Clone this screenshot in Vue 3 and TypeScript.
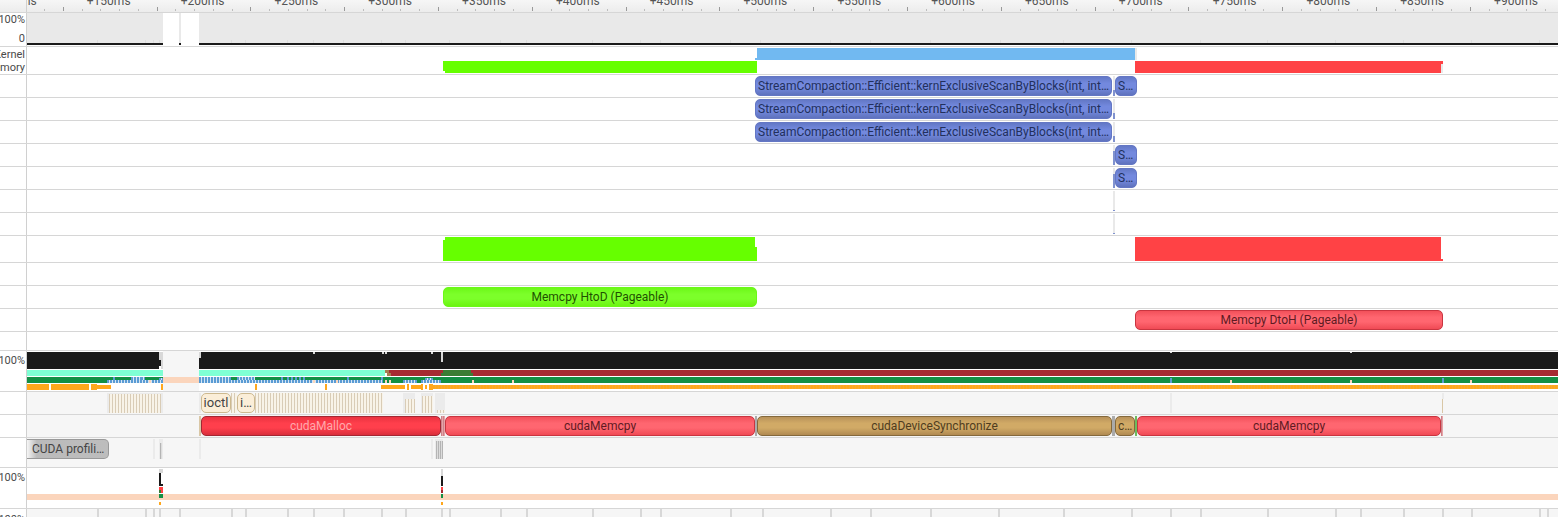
<template>
  <div class="timeline">
    <div
      v-for="(row, i) in rows"
      :key="i"
      class="row"
      :class="row.cls"
      :style="{ height: row.h + 'px' }"
    >
      <div class="gutter">
        <span
          v-for="l in row.labels"
          :key="l.text"
          class="row-label"
          :style="{ top: l.y - row.top + 'px' }"
        >{{ l.text }}</span>
      </div>
      <div class="track">
        <template v-if="i === 0">
          <span v-for="t in ticks" :key="t.x" class="tick" :class="{ major: t.major }" :style="{ left: t.x - 27 + 'px' }"></span>
          <span v-for="m in marks" :key="m.text" class="mark" :style="{ left: m.x - 27 + 'px' }">{{ m.text }}</span>
        </template>
        <div
          v-for="(b, j) in row.bars"
          :key="j"
          class="bar"
          :class="b.k"
          :style="{ left: b.x - 27 + 'px', width: b.w + 'px', top: b.y - row.top + 'px', height: b.h + 'px' }"
        >{{ b.t }}</div>
      </div>
    </div>
  </div>
</template>

<script setup lang="ts">
interface Bar {
  x: number
  w: number
  y: number
  h: number
  k: string
  t?: string
}
interface Label {
  text: string
  y: number
}
interface Row {
  h: number
  top: number
  cls?: string
  labels: Label[]
  bars: Bar[]
}

// x1, x2, y1, y2 are page coordinates from the trace
function b(x1: number, x2: number, y1: number, y2: number, k: string, t?: string): Bar {
  return { x: x1, w: x2 - x1, y: y1, h: y2 - y1, k, t }
}
function many(xs: number[], w: number, y1: number, y2: number, k: string): Bar[] {
  return xs.map((x) => b(x, x + w, y1, y2, k))
}

const kernName = 'StreamCompaction::Efficient::kernExclusiveScanByBlocks(int, int, int*, int*, int*)'

const ticks: { x: number; major: boolean }[] = []
for (let n = 0; n < 84; n++) {
  ticks.push({ x: Math.round(44 + n * 18.76), major: (n + 4) % 5 === 0 })
}
const marks: { x: number; text: string }[] = []
for (let n = 0; n < 17; n++) {
  marks.push({ x: -7 + n * 93.82, text: '+' + (100 + n * 50) + 'ms' })
}

const cpuBars: Bar[] = [
  b(27, 163, 13, 43, 'gray'),
  b(179, 181, 13, 43, 'gray'),
  b(199, 1558, 13, 43, 'gray'),
  ...many([97, 145, 153, 159, 231, 245, 287, 313, 343, 381, 405, 449, 500, 526, 592, 640, 660, 730, 760, 830, 870, 930, 1000, 1063, 1131, 1200, 1267, 1335, 1403, 1471, 1539], 1, 40, 43, 'faint'),
  b(27, 163, 43, 45, 'black'),
  b(179, 181, 43, 45, 'black'),
  b(199, 1558, 43, 45, 'black'),
]

const memBars: Bar[] = [
  b(443, 757, 61, 71, 'lime'),
  b(445, 757, 71, 73, 'lime'),
  b(757, 1135, 48, 60, 'sky'),
  b(755, 757, 58, 60, 'sky'),
  b(1135, 1137, 48, 60, 'gray'),
  b(1135, 1443, 61, 64, 'red'),
  b(1135, 1441, 64, 73, 'red'),
  b(1441, 1443, 64, 73, 'gray'),
]

function kernRow(top: number, s: boolean): Bar[] {
  const out: Bar[] = [
    b(755, 1112, top + 1, top + 21, 'slice blue', kernName),
    b(1113, 1115, top + 1, top + 15, 'gray'),
    b(1113, 1115, top + 15, top + 21, 'thin-blue'),
  ]
  if (s) out.push(b(1115, 1137, top + 1, top + 21, 'slice blue', 'S…'))
  return out
}
function shortRow(top: number): Bar[] {
  return [
    b(1113, 1115, top + 1, top + 7, 'gray'),
    b(1113, 1115, top + 7, top + 21, 'thin-blue'),
    b(1115, 1137, top + 1, top + 21, 'slice blue', 'S…'),
  ]
}
function tailRow(top: number): Bar[] {
  return [b(1113, 1115, top + 1, top + 20, 'gray'), b(1113, 1115, top + 20, top + 21, 'thin-blue')]
}

const bigBars: Bar[] = [
  b(445, 755, 237, 240, 'lime'),
  b(443, 755, 240, 247, 'lime'),
  b(443, 757, 247, 261, 'lime'),
  b(1135, 1441, 237, 259, 'red'),
  b(1135, 1443, 259, 261, 'red'),
]

const procBars: Bar[] = [
  b(163, 199, 351, 391, 'pale'),
  b(27, 159, 352, 369, 'black'),
  b(159, 161, 352, 366, 'black'),
  b(159, 163, 352, 360, 'gray-2'),
  b(161, 163, 360, 369, 'gray-2'),
  b(199, 1558, 352, 369, 'black'),
  b(199, 201, 352, 358, 'gray-2'),
  ...many([313, 382, 385, 431], 2, 352, 354, 'gray-2'),
  b(441, 443, 352, 362, 'gray-2'),
  ...many([1170, 1350], 2, 352, 353, 'gray-2'),
  b(27, 163, 370, 376, 'mint'),
  b(199, 385, 370, 376, 'mint'),
  b(385, 389, 370, 373, 'tan'),
  b(387, 391, 373, 376, 'tan'),
  b(389, 1558, 370, 373, 'maroon'),
  b(391, 1558, 373, 376, 'maroon'),
  b(443, 471, 370, 373, 'forest'),
  b(441, 473, 373, 376, 'forest'),
  b(27, 163, 377, 383, 'green'),
  b(163, 199, 377, 383, 'peach'),
  b(199, 1558, 377, 383, 'green'),
  b(107, 163, 380, 383, 'dots'),
  b(131, 141, 377, 380, 'dots'),
  b(113, 115, 377, 380, 'dots'),
  b(141, 145, 377, 380, 'dots'),
  b(159, 163, 378, 380, 'dots'),
  b(199, 383, 380, 383, 'dots'),
  b(199, 231, 377, 380, 'dots'),
  b(237, 255, 377, 380, 'dots'),
  ...many([281, 287, 291, 295, 299, 303, 347, 381], 2, 377, 380, 'dots'),
  b(403, 417, 380, 383, 'dots'),
  b(421, 441, 380, 383, 'dots'),
  b(425, 433, 378, 380, 'dots'),
  ...many([149, 313, 336, 385, 389, 472, 512, 1230, 1350, 1470], 2, 380, 383, 'peach'),
  ...many([1170, 1442], 2, 378, 383, 'dots'),
  b(27, 49, 384, 390, 'orange'),
  b(51, 89, 384, 390, 'orange'),
  b(91, 97, 384, 390, 'orange'),
  b(97, 111, 385, 389, 'orange'),
  ...many([161, 255, 325], 2, 384, 390, 'orange'),
  b(381, 405, 385, 389, 'orange'),
  b(407, 409, 384, 390, 'orange'),
  b(411, 421, 385, 389, 'orange'),
  b(421, 423, 384, 390, 'orange'),
  b(425, 427, 385, 389, 'orange'),
  b(429, 433, 384, 390, 'orange'),
  b(433, 1558, 385, 389, 'orange-run'),
]

const ioBars: Bar[] = [
  b(163, 199, 392, 414, 'pale'),
  b(107, 163, 393, 413, 'shade'),
  b(109, 161, 394, 413, 'stripes'),
  b(199, 201, 393, 413, 'shade'),
  b(201, 231, 393, 413, 'slice cream', 'ioctl'),
  b(231, 237, 393, 413, 'stripes'),
  b(237, 255, 393, 413, 'slice cream', 'i…'),
  b(255, 383, 393, 413, 'stripes'),
  b(403, 415, 393, 413, 'shade'),
  b(405, 415, 399, 413, 'stripes'),
  b(421, 433, 393, 413, 'shade'),
  b(422, 433, 396, 413, 'stripes'),
  b(435, 445, 393, 413, 'shade'),
  b(437, 445, 410, 413, 'stripes'),
  b(1170, 1172, 393, 413, 'shade'),
  b(1442, 1444, 393, 399, 'shade'),
  b(1442, 1443, 399, 413, 'thin-tan'),
]

const apiBars: Bar[] = [
  b(199, 201, 416, 436, 'thin-tan'),
  b(201, 441, 416, 436, 'slice crimson', 'cudaMalloc'),
  b(441, 445, 416, 436, 'thin-rose'),
  b(445, 755, 416, 436, 'slice rose', 'cudaMemcpy'),
  b(755, 757, 416, 436, 'thin-grey'),
  b(757, 1112, 416, 436, 'slice sand', 'cudaDeviceSynchronize'),
  b(1112, 1115, 416, 436, 'thin-grey'),
  b(1115, 1135, 416, 436, 'slice sand', 'c…'),
  b(1135, 1137, 416, 436, 'thin-green'),
  b(1137, 1441, 416, 436, 'slice rose', 'cudaMemcpy'),
  b(1441, 1443, 416, 436, 'thin-rose'),
]

const cudaBars: Bar[] = [
  b(27, 109, 439, 459, 'slice cuda', 'CUDA profili…'),
  b(153, 155, 439, 459, 'shade'),
  b(159, 163, 439, 459, 'shade'),
  b(160, 162, 443, 459, 'fade-grey'),
  b(199, 201, 439, 459, 'shade'),
  b(431, 433, 439, 459, 'shade'),
  b(435, 443, 439, 459, 'shade'),
  b(436, 443, 441, 459, 'fade-grey'),
]

const gpuBars: Bar[] = [
  b(27, 1558, 494, 500, 'peach'),
  b(159, 163, 469, 473, 'gray-2'),
  b(159, 161, 473, 486, 'black'),
  b(161, 163, 484, 486, 'black'),
  b(159, 163, 487, 493, 'red'),
  b(159, 161, 490, 493, 'forest'),
  b(159, 163, 494, 498, 'green'),
  b(159, 161, 502, 505, 'orange'),
  b(441, 443, 469, 476, 'gray-2'),
  b(441, 443, 476, 486, 'black'),
  b(441, 443, 487, 490, 'red'),
  b(441, 443, 490, 493, 'maroon'),
  b(441, 443, 494, 498, 'green'),
  b(441, 443, 502, 505, 'orange'),
]

const lastBars = many(
  [97, 145, 153, 159, 179, 231, 245, 287, 313, 343, 381, 405, 441, 449, 500, 526, 592, 640, 660, 730, 762, 830, 870, 930, 998, 1063, 1131, 1170, 1200, 1267, 1335, 1360, 1403, 1442, 1471, 1539, 1547],
  2,
  509,
  517,
  'shade-2',
)

const plan: { h: number; cls?: string; labels?: Label[]; bars?: Bar[] }[] = [
  { h: 12, cls: 'ruler' },
  { h: 33, labels: [{ text: '100%', y: 13 }, { text: '0', y: 32 }], bars: cpuBars },
  { h: 27, labels: [{ text: 'Kernel', y: 48 }, { text: 'Memory', y: 61 }], bars: memBars },
  { h: 22, bars: kernRow(75, true) },
  { h: 22, bars: kernRow(98, false) },
  { h: 22, bars: kernRow(121, false) },
  { h: 22, bars: shortRow(144) },
  { h: 22, bars: shortRow(167) },
  { h: 22, bars: tailRow(190) },
  { h: 22, bars: tailRow(213) },
  { h: 26, bars: bigBars },
  { h: 22 },
  { h: 22, bars: [b(443, 757, 287, 307, 'slice lime-slice', 'Memcpy HtoD (Pageable)')] },
  { h: 22, bars: [b(1135, 1443, 310, 330, 'slice rose', 'Memcpy DtoH (Pageable)')] },
  { h: 18 },
  { h: 40, labels: [{ text: '100%', y: 354 }], bars: procBars },
  { h: 22, cls: 'soft', bars: ioBars },
  { h: 22, cls: 'soft', bars: apiBars },
  { h: 29, cls: 'soft', bars: cudaBars },
  { h: 40, labels: [{ text: '100%', y: 471 }], bars: gpuBars },
  { h: 8, cls: 'soft', labels: [{ text: '100%', y: 513 }], bars: lastBars },
]

let top = 0
const rows: Row[] = plan.map((p) => {
  const row: Row = { h: p.h, top, cls: p.cls, labels: p.labels ?? [], bars: p.bars ?? [] }
  top += p.h + 1
  return row
})
</script>

<style>
html,
body {
  margin: 0;
  background: #fff;
  overflow: hidden;
}
</style>

<style scoped>
.timeline {
  width: 1558px;
  height: 517px;
  overflow: hidden;
  font-family: Roboto, "Liberation Sans", sans-serif;
  font-size: 12px;
  color: #333;
}
.row {
  display: flex;
  box-sizing: content-box;
  border-bottom: 1px solid #d6d6d6;
  background: #fff;
}
.row:last-child {
  border-bottom: none;
}
.gutter {
  position: relative;
  flex: 0 0 26px;
  width: 26px;
  border-right: 1px solid #d0d0d0;
  overflow: hidden;
  background: #fff;
}
.row-label {
  position: absolute;
  right: 1px;
  font-size: 11px;
  line-height: 14px;
  white-space: nowrap;
  color: #4a4a4a;
}
.track {
  position: relative;
  flex: 1;
  overflow: hidden;
}
.ruler .track,
.ruler .gutter {
  background: linear-gradient(#f6f6f6, #ececec);
}
.soft .track {
  background: #f6f6f6;
}
.tick {
  position: absolute;
  top: 9px;
  width: 1px;
  height: 2px;
  background: #bdbdbd;
}
.tick.major {
  top: 7px;
  height: 4px;
  background: #999;
}
.mark {
  position: absolute;
  top: -6px;
  line-height: 14px;
  color: #555;
  white-space: nowrap;
}
.bar {
  position: absolute;
  box-sizing: border-box;
}
.gray { background: #e9e9e9; }
.gray-2 { background: #d8d8d8; }
.faint { background: #dedede; }
.black { background: #1a1a1a; }
.lime { background: #66ff00; }
.sky { background: #71b9f1; }
.red { background: #ff4245; }
.pale { background: #f6f6f6; }
.mint { background: #7fffd4; }
.tan { background: #a67c4f; }
.maroon { background: #a52a32; }
.forest { background: #3a7d34; }
.green { background: #128f45; }
.peach { background: #fbd5bc; }
.orange { background: #ffa71c; }
.orange-run {
  background: repeating-linear-gradient(90deg, #ffa71c 0 2px, #f5ab30 2px 3px);
}
.dots {
  background: repeating-linear-gradient(90deg, #5a9bd4 0 2px, #d5e6f4 2px 3px);
}
.shade { background: #ebebeb; }
.shade-2 { background: #d8d8d8; }
.stripes {
  background: repeating-linear-gradient(90deg, #d9ccb6 0 1px, #f8f3e8 1px 3px);
}
.thin-blue { background: #8092cf; }
.thin-tan { background: #d9c7a6; }
.thin-rose {
  background: repeating-linear-gradient(90deg, #c9848a 0 1px, #e8a3a8 1px 2px);
}
.thin-grey { background: #aaa; }
.fade-grey {
  background: repeating-linear-gradient(90deg, #b4b4b4 0 1px, #dcdcdc 1px 2px);
}
.thin-green { background: #6dbb5e; }
.slice {
  border: 1px solid;
  border-radius: 5px;
  padding: 0 2px;
  line-height: 18px;
  text-align: center;
  white-space: nowrap;
  overflow: hidden;
  text-overflow: ellipsis;
}
.blue {
  text-align: left;
  color: #22305c;
  border-color: #6477c4;
  background: linear-gradient(#6378c6, #7389de 35%, #7389de 60%, #5f72bd);
}
.cream {
  color: #444;
  font-size: 13px;
  padding: 0;
  text-overflow: clip;
  border-color: #cdb98f;
  background: #fbeed8;
}
.crimson {
  color: #ffa8ac;
  border-color: #a32733;
  background: linear-gradient(#e9323f, #ff3f4c 35%, #ff3f4c 60%, #d92e3b);
}
.rose {
  color: #5f1a22;
  border-color: #c93540;
  background: linear-gradient(#f2505a, #ff6670 35%, #ff6670 60%, #f04a55);
}
.sand {
  color: #4f3c1e;
  border-color: #84693c;
  background: linear-gradient(#b8925a, #d1aa66 35%, #d1aa66 60%, #b08a52);
}
.lime-slice {
  color: #1f5200;
  border-color: #6cf818;
  background: linear-gradient(#6cf818, #7cff2a 35%, #7cff2a 60%, #6cf412);
}
.cuda {
  color: #444;
  text-align: left;
  padding: 0 0 0 5px;
  border: 1px solid #999;
  border-left: none;
  border-radius: 0 5px 5px 0;
  background: linear-gradient(90deg, #f6f6f6, #bbb 12%, #bdbdbd);
}
</style>
